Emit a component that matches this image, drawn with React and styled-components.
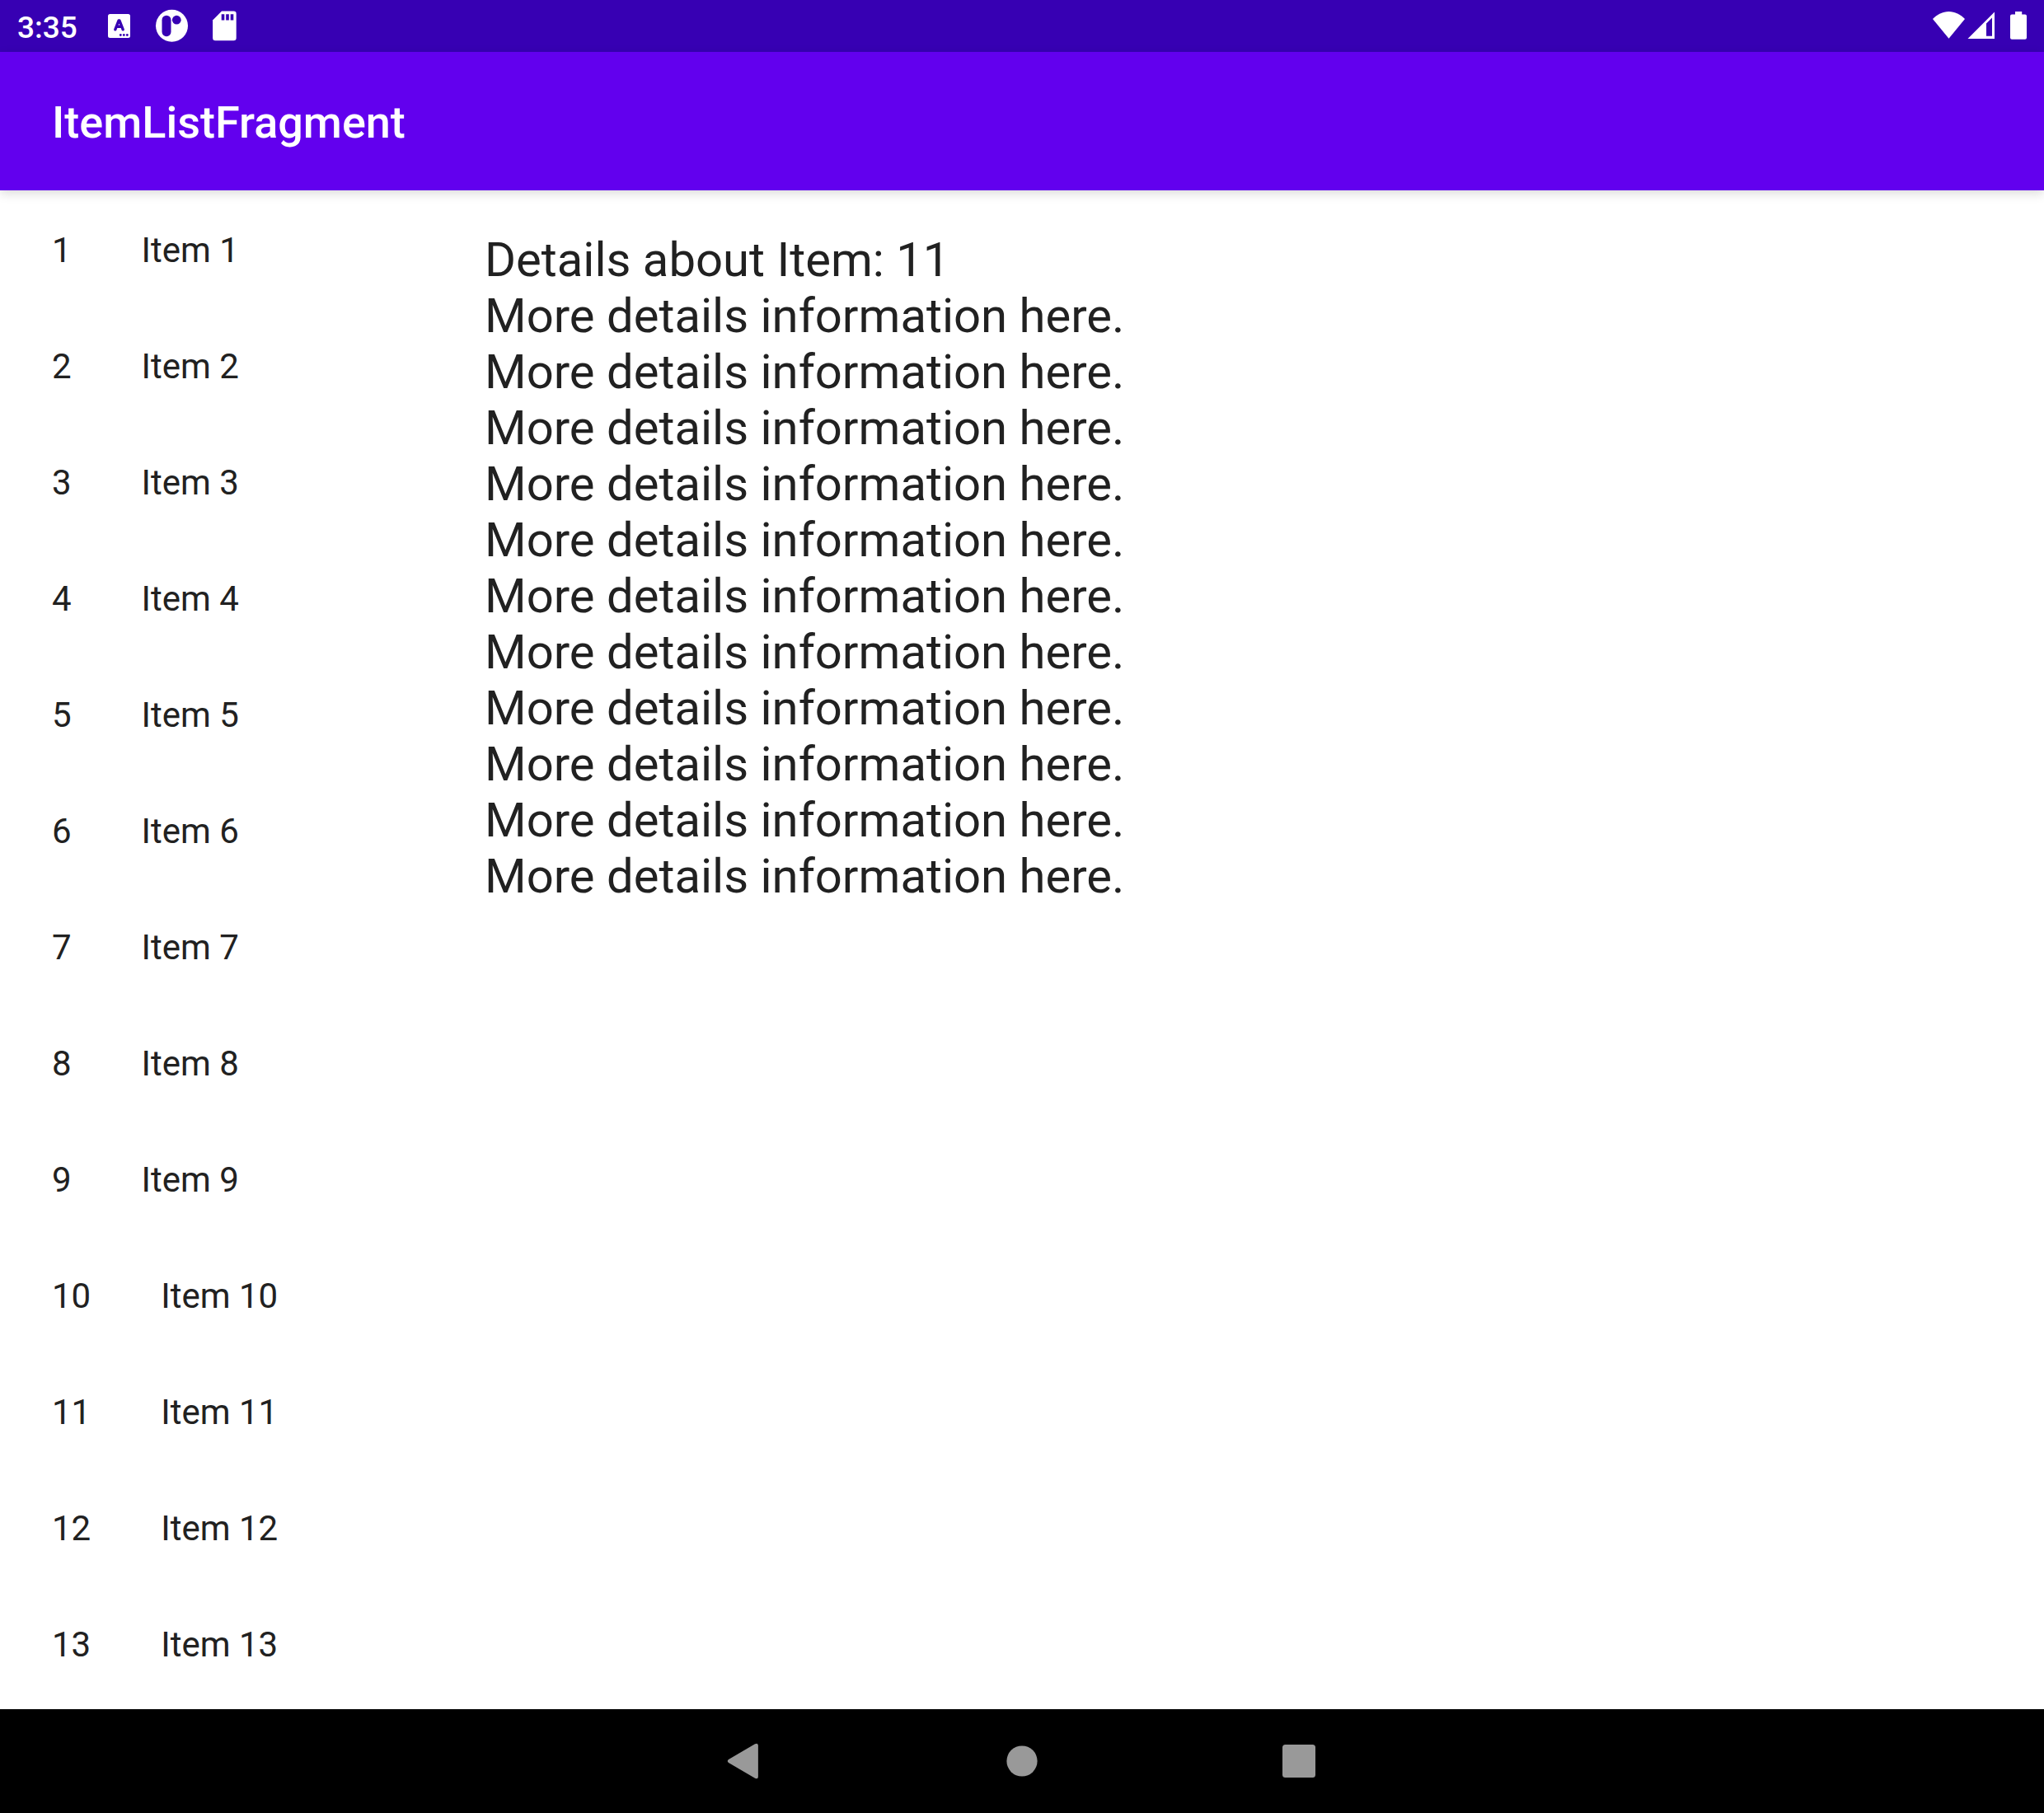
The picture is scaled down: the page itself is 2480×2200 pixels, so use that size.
import React from "react";
import styled, { createGlobalStyle } from "styled-components";

const GlobalStyle = createGlobalStyle`
  *, *::before, *::after { box-sizing: border-box; }
  body {
    margin: 0;
    background: #fff;
    color: #212121;
    font-family: Roboto, "Noto Sans", sans-serif;
  }
`;

const Screen = styled.div`
  display: flex;
  flex-direction: column;
  min-height: 100vh;
`;

const StatusBar = styled.div`
  display: flex;
  align-items: center;
  justify-content: space-between;
  height: 63px;
  padding: 0 20px 0 21px;
  background: #3700b3;
  color: #fff;
`;

const StatusGroup = styled.div`
  display: flex;
  align-items: center;
`;

const Clock = styled.time`
  padding-top: 4px;
  margin-right: 27px;
  font-size: 37px;
  line-height: 44px;
  font-weight: 500;
`;

const StatusIcon = styled.svg`
  display: block;
  width: ${(p) => p.$width}px;
  height: 63px;
  fill: #fff;
`;

const AppBar = styled.header`
  position: relative;
  display: flex;
  align-items: center;
  height: 168px;
  padding: 4px 63px 0;
  background: #6200ee;
  box-shadow: 0 4px 12px rgba(0, 0, 0, 0.14);
`;

const Title = styled.h1`
  margin: 0;
  color: #fff;
  font-size: 54px;
  line-height: 62px;
  font-weight: 500;
`;

const Panes = styled.main`
  display: flex;
  flex: 1;
`;

const ItemList = styled.ul`
  flex: 0 0 525px;
  margin: 0;
  padding: 0;
  list-style: none;
`;

const ItemRow = styled.button`
  display: flex;
  gap: 85px;
  width: 100%;
  padding: 44px 63px 40px;
  border: 0;
  background: transparent;
  color: inherit;
  font: inherit;
  font-size: 42px;
  line-height: 57px;
  text-align: left;
`;

const Details = styled.section`
  flex: 1;
  padding: 50px 63px;
  font-size: 58px;
  line-height: 68px;
`;

const DetailLine = styled.p`
  margin: 0;
`;

const NavBar = styled.nav`
  display: flex;
  align-items: center;
  justify-content: center;
  gap: 272px;
  height: 126px;
  background: #000;
`;

const NavButton = styled.button`
  width: 64px;
  height: 64px;
  padding: 0;
  border: 0;
  background: transparent;
`;

const NavIcon = styled.svg`
  display: block;
  width: 64px;
  height: 64px;
  fill: #999;
`;

const ITEMS = Array.from({ length: 13 }, (_, i) => String(i + 1));
const SELECTED = "11";
const DETAIL_LINES = Array.from({ length: 11 }, () => "More details information here.");

function KeyboardIcon() {
  return (
    <StatusIcon $width={48} viewBox="121 0 48 63" aria-hidden="true">
      <rect x="131" y="17" width="27" height="29" rx="2.5" />
      <path
        d="M139.8 35.800 L144 25 H145 L149.200 35.800 M141.500 32.300 H147.500"
        fill="none"
        stroke="#3700b3"
        strokeWidth="3.4"
        strokeLinecap="round"
        strokeLinejoin="round"
      />
      <g fill="#3700b3">
        <circle cx="146.3" cy="42.5" r="1.4" />
        <circle cx="150.3" cy="42.5" r="1.4" />
        <circle cx="154.3" cy="42.5" r="1.4" />
      </g>
    </StatusIcon>
  );
}

function BadgeIcon() {
  return (
    <StatusIcon $width={76} viewBox="169 0 76 63" aria-hidden="true">
      <circle cx="208.5" cy="31.3" r="19.5" />
      <rect x="196.5" y="18.7" width="11" height="25.5" rx="5.5" fill="#3700b3" />
      <circle cx="214.3" cy="24.2" r="5.4" fill="#3700b3" />
    </StatusIcon>
  );
}

function SdCardIcon() {
  return (
    <StatusIcon $width={45} viewBox="245 0 45 63" aria-hidden="true">
      <path d="M269 13.5 H283.5 a3.2 3.2 0 0 1 3.2 3.2 V46 a3.2 3.2 0 0 1 -3.2 3.2 H261.3 a3.2 3.2 0 0 1 -3.2 -3.2 V24.5 Z" />
      <path d="M268.7 17.2h3.6v7.2h-3.6z M274.2 17.2h3.6v7.2h-3.6z M279.7 17.2h3.6v7.2h-3.6z" fill="#3700b3" />
    </StatusIcon>
  );
}

function WifiIcon() {
  return (
    <StatusIcon $width={40} viewBox="2345 0 40 63" role="img" aria-label="Wi-Fi">
      <path d="M2364.5 46.8 L2345 23 C2350.500 17.500 2357 14 2364.500 14 C2372 14 2378.500 17.500 2384 23 Z" />
    </StatusIcon>
  );
}

function SignalIcon() {
  return (
    <StatusIcon $width={36} viewBox="2385 0 36 63" role="img" aria-label="Mobile signal">
      <path
        fillRule="evenodd"
        d="M2387.500 47 L2420 14.500 V47 Z M2410 28.500 V43.800 H2417 V21.500 Z"
      />
    </StatusIcon>
  );
}

function BatteryIcon() {
  return (
    <StatusIcon $width={39} viewBox="2421 0 39 63" role="img" aria-label="Battery">
      <path d="M2445 14 h8.200 v3.500 h3.800 a2 2 0 0 1 2 2 V45.800 a2 2 0 0 1 -2 2 h-16 a2 2 0 0 1 -2 -2 V19.500 a2 2 0 0 1 2 -2 h4 Z" />
    </StatusIcon>
  );
}

export default function App() {
  return (
    <>
      <GlobalStyle />
      <Screen>
        <StatusBar>
          <StatusGroup>
            <Clock>3:35</Clock>
            <KeyboardIcon />
            <BadgeIcon />
            <SdCardIcon />
          </StatusGroup>
          <StatusGroup>
            <WifiIcon />
            <SignalIcon />
            <BatteryIcon />
          </StatusGroup>
        </StatusBar>
        <AppBar>
          <Title>ItemListFragment</Title>
        </AppBar>
        <Panes>
          <ItemList>
            {ITEMS.map((id) => (
              <li key={id}>
                <ItemRow type="button">
                  <span>{id}</span>
                  <span>Item {id}</span>
                </ItemRow>
              </li>
            ))}
          </ItemList>
          <Details>
            <DetailLine>Details about Item: {SELECTED}</DetailLine>
            {DETAIL_LINES.map((line, i) => (
              <DetailLine key={i}>{line}</DetailLine>
            ))}
          </Details>
        </Panes>
        <NavBar>
          <NavButton type="button" aria-label="Back">
            <NavIcon viewBox="872 2105 64 64">
              <path d="M884 2135 L916 2116.300 Q919.900 2114.500 919.900 2118.300 V2155.700 Q919.900 2159.500 916 2157.700 L884 2139 Q881.500 2137 884 2135 Z" />
            </NavIcon>
          </NavButton>
          <NavButton type="button" aria-label="Home">
            <NavIcon viewBox="0 0 64 64">
              <circle cx="32" cy="32" r="18.600" />
            </NavIcon>
          </NavButton>
          <NavButton type="button" aria-label="Overview">
            <NavIcon viewBox="0 0 64 64">
              <rect x="12" y="12" width="40" height="40" rx="3.500" />
            </NavIcon>
          </NavButton>
        </NavBar>
      </Screen>
    </>
  );
}
